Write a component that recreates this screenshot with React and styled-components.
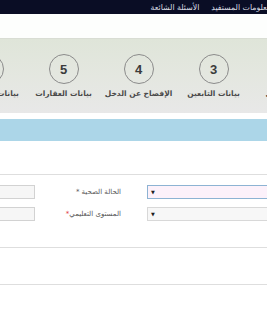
import React from "react";
import styled, { createGlobalStyle } from "styled-components";

const GlobalStyle = createGlobalStyle`
  body {
    margin: 0;
    background: #ffffff;
    overflow: hidden;
  }
`;

const Page = styled.div`
  direction: rtl;
  width: 267px;
  height: 322px;
  overflow: hidden;
  font-family: "DejaVu Sans", "Noto Sans", sans-serif;
  background: #ffffff;
`;

const TopBar = styled.nav`
  height: 14px;
  background: #0a0d25;
  display: flex;
  align-items: center;
  gap: 12px;
  margin-right: -4px;
`;

const TopLink = styled.span`
  color: #dcdee4;
  font-size: 7.8px;
  white-space: nowrap;
`;

const HeaderSpace = styled.div`
  height: 24px;
  background: #fdfefd;
`;

const StepsBand = styled.div`
  height: 75px;
  box-sizing: border-box;
  border-top: 1px solid #d9ddd4;
  background: linear-gradient(180deg, #dfe5d9 0%, #e4e7e0 50%, #e8e8e8 100%);
  overflow: hidden;
`;

const StepsRow = styled.div`
  display: flex;
  margin-right: -134px;
  padding-top: 15px;
`;

const Step = styled.div`
  width: 75px;
  flex-shrink: 0;
  display: flex;
  flex-direction: column;
  align-items: center;
`;

const Circle = styled.div`
  width: 30px;
  height: 30px;
  box-sizing: border-box;
  border: 1.5px solid #8b8b8b;
  border-radius: 50%;
  display: flex;
  align-items: center;
  justify-content: center;
  font-family: "Liberation Sans", Arial, sans-serif;
  font-weight: 700;
  font-size: 13px;
  color: #3b3b3b;
`;

const StepLabel = styled.div`
  margin-top: 5px;
  font-size: 7.5px;
  font-weight: 700;
  color: #4a4a4a;
  white-space: nowrap;
`;

const SectionBar = styled.div`
  margin-top: 6px;
  height: 22px;
  background: #acd6e8;
`;

const FormArea = styled.div`
  margin-top: 33px;
  border-top: 1px solid #dedede;
  padding-top: 10px;
  display: flex;
  flex-direction: column;
  gap: 8px;
`;

const Row = styled.div`
  display: flex;
  align-items: center;
  height: 14px;
  margin-right: -30px;
`;

const SelectBox = styled.div`
  width: 150px;
  height: 14px;
  flex-shrink: 0;
  box-sizing: border-box;
  border: 1px solid ${(p) => (p.$focused ? "#8db3d3" : "#d8d8d8")};
  background: ${(p) => (p.$focused ? "#fcf1fa" : "#f7f7f7")};
  display: flex;
  align-items: center;
  justify-content: flex-end;
  padding-left: 3px;
`;

const Arrow = styled.span`
  font-size: 5px;
  color: #1e1e1e;
`;

const LabelCell = styled.label`
  width: 112px;
  flex-shrink: 0;
  box-sizing: border-box;
  padding-right: 26px;
  font-size: 7px;
  color: #555555;
  white-space: nowrap;
`;

const Star = styled.span`
  color: ${(p) => (p.$red ? "#e03a3a" : "#555555")};
`;

const InputBox = styled.div`
  width: 60px;
  height: 14px;
  flex-shrink: 0;
  box-sizing: border-box;
  border: 1px solid #d2d2d2;
  background: #f6f6f6;
`;

const Divider = styled.div`
  border-top: 1px solid #dedede;
  margin-top: ${(p) => p.$top}px;
`;

const steps = [
  { n: 1, label: "البيانات الشخصية" },
  { n: 2, label: "بيانات العمل" },
  { n: 3, label: "بيانات التابعين" },
  { n: 4, label: "الإفصاح عن الدخل" },
  { n: 5, label: "بيانات العقارات" },
  { n: 6, label: "بيانات الالتزامات" },
  { n: 7, label: "الإقرار" },
];

export default function App() {
  return (
    <>
      <GlobalStyle />
      <Page>
        <TopBar>
          <TopLink>معلومات المستفيد</TopLink>
          <TopLink>الأسئلة الشائعة</TopLink>
        </TopBar>
        <HeaderSpace />
        <StepsBand>
          <StepsRow>
            {steps.map((s) => (
              <Step key={s.n}>
                <Circle>{s.n}</Circle>
                <StepLabel>{s.label}</StepLabel>
              </Step>
            ))}
          </StepsRow>
        </StepsBand>
        <SectionBar />
        <FormArea>
          <Row>
            <SelectBox $focused>
              <Arrow>▼</Arrow>
            </SelectBox>
            <LabelCell>
              الحالة الصحية <Star>*</Star>
            </LabelCell>
            <InputBox />
          </Row>
          <Row>
            <SelectBox>
              <Arrow>▼</Arrow>
            </SelectBox>
            <LabelCell>
              المستوى التعليمي<Star $red>*</Star>
            </LabelCell>
            <InputBox />
          </Row>
        </FormArea>
        <Divider $top={26} />
        <Divider $top={36} />
      </Page>
    </>
  );
}
